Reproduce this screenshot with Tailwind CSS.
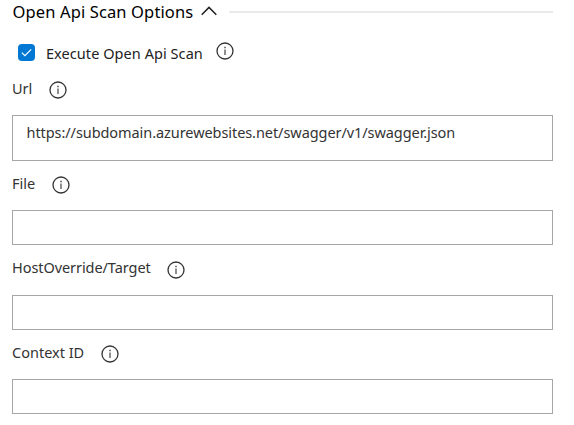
<!DOCTYPE html>
<html lang="en">
<head>
<meta charset="utf-8">
<title>Open Api Scan Options</title>
<script src="https://cdn.jsdelivr.net/npm/@tailwindcss/browser@4"></script>
</head>
<body class="bg-white font-['Noto_Sans',sans-serif] text-[14.5px] text-[#333]">
<svg class="hidden">
  <symbol id="info" viewBox="0 0 18 18">
    <circle cx="9" cy="9" r="8" fill="none" stroke="#333" stroke-width="1.3"/>
    <path d="M9 7.5v5.5" stroke="#444" stroke-width="1.2"/>
    <path d="M9 4.8v1.4" stroke="#444" stroke-width="1.4"/>
  </symbol>
</svg>
<main class="w-[553px] pl-3">
  <header class="flex h-6 items-center text-[16.5px] text-black">
    <h2 class="w-[188px] whitespace-nowrap pl-[0.5px] leading-6 tracking-[0.13px]">Open Api Scan Options</h2>
    <svg class="mb-[2px] h-[10px] w-[18px] shrink-0" viewBox="0 0 18 10"><path d="M1.7 8.7L9 1.4L16.3 8.7" fill="none" stroke="#222" stroke-width="1.5"/></svg>
    <div class="ml-[11px] h-[2px] flex-1 bg-[#eaeaea]"></div>
  </header>
  <div class="flex h-[53px] pl-[6px] pt-[18px]">
    <span class="mt-[2px] flex h-[17px] w-[17px] items-center justify-center rounded-[4px] bg-[#0078d4]">
      <svg class="h-[11px] w-[11px]" viewBox="0 0 11 11"><path d="M.8 5.6L3.9 8.6L10.2 2.4" fill="none" stroke="#fff" stroke-width="1.2"/></svg>
    </span>
    <span class="ml-[11px] mt-[1px] w-[170px] whitespace-nowrap leading-5 tracking-[0.06px] text-[#222]">Execute Open Api Scan</span>
    <svg class="h-[18px] w-[18px]"><use href="#info"/></svg>
  </div>
  <div class="flex h-[38px]">
    <label class="mt-[1px] w-[37px] whitespace-nowrap leading-5">Url</label>
    <svg class="mt-[4px] h-[18px] w-[18px]"><use href="#info"/></svg>
  </div>
  <div class="h-[46px] whitespace-nowrap border border-[#a6a6a6] pl-[13.5px] pt-[6px] leading-5 tracking-[-0.07px]">https://subdomain.azurewebsites.net/swagger/v1/swagger.json</div>
  <div class="flex h-[49px]">
    <label class="mt-[12px] w-[40px] whitespace-nowrap leading-5">File</label>
    <svg class="mt-[15px] h-[18px] w-[18px]"><use href="#info"/></svg>
  </div>
  <div class="h-[35px] border border-[#a6a6a6]"></div>
  <div class="flex h-[50px]">
    <label class="mt-[12px] w-[155px] whitespace-nowrap leading-5 tracking-[-0.07px]">HostOverride/Target</label>
    <svg class="mt-[16px] h-[18px] w-[18px]"><use href="#info"/></svg>
  </div>
  <div class="h-[35px] border border-[#a6a6a6]"></div>
  <div class="flex h-[49px]">
    <label class="mt-[12px] w-[89px] whitespace-nowrap leading-5">Context ID</label>
    <svg class="mt-[15px] h-[18px] w-[18px]"><use href="#info"/></svg>
  </div>
  <div class="h-[35px] border border-[#a6a6a6]"></div>
</main>
</body>
</html>
